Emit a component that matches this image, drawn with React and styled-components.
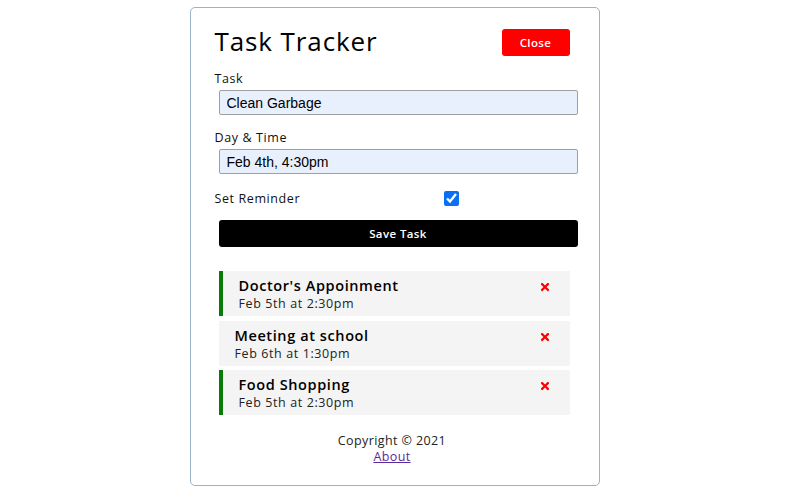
import React, { useState } from "react";
import styled, { createGlobalStyle } from "styled-components";
import { FaTimes } from "react-icons/fa";

const Global = createGlobalStyle`
  * { box-sizing: border-box; }
  body {
    margin: 0;
    background: #fff;
    font-family: "Open Sans", "Noto Sans", sans-serif;
    color: #000;
  }
`;

const Page = styled.div`
  display: flex;
  justify-content: center;
  padding: 7px 11px 0 0;
`;

const Container = styled.div`
  width: 410px;
  height: 479px;
  border: 1.5px solid #98b3ca;
  border-radius: 5px;
  padding: 21px 29px 20px 24px;
  display: flex;
  flex-direction: column;
`;

const Header = styled.header`
  display: flex;
  justify-content: space-between;
  align-items: center;
  height: 27px;
  margin-bottom: 15px;
`;

const Title = styled.h1`
  margin: 0;
  font-size: 26px;
  font-weight: 500;
  letter-spacing: 0.9px;
  line-height: 27px;
  margin-top: -3px;
`;

const Button = styled.button`
  background: ${(p) => p.$bg};
  color: #fff;
  border: none;
  border-radius: 3px;
  height: 27px;
  font-family: "Open Sans", sans-serif;
  font-size: 11.5px;
  font-weight: 600;
  letter-spacing: 0.4px;
  cursor: pointer;
  padding: 0;
  width: ${(p) => (p.$block ? "calc(100% + 4px)" : "68px")};
  margin-left: ${(p) => (p.$block ? "4px" : "0")};
  display: block;
`;

const Form = styled.form`
  display: flex;
  flex-direction: column;
`;

const Field = styled.div`
  display: flex;
  flex-direction: column;
  margin-bottom: 15px;
`;

const Label = styled.label`
  font-size: 12.5px;
  line-height: 16px;
  height: 16px;
  margin-bottom: 3px;
  letter-spacing: 0.6px;
  color: #111;
`;

const Input = styled.input`
  width: calc(100% + 4px);
  margin-left: 4px;
  height: 25px;
  background: #e8f0fe;
  border: 1.5px solid #a0a0a0;
  border-radius: 2px;
  padding: 0 7px;
  font-family: "Liberation Sans", Arial, sans-serif;
  font-size: 14px;
  color: #000;
`;

const CheckRow = styled.div`
  display: flex;
  align-items: center;
  height: 19px;
  margin-bottom: 12px;
`;

const CheckLabel = styled.label`
  flex: 1;
  font-size: 12.5px;
  letter-spacing: 0.6px;
  color: #111;
`;

const Check = styled.input`
  flex: 2;
  height: 15px;
  margin: 0;
  accent-color: #0b6ff2;
`;

const TaskList = styled.div`
  display: flex;
  flex-direction: column;
  gap: 4.5px;
  margin-top: 24px;
`;

const TaskItem = styled.div`
  margin-left: 4px;
  height: 45px;
  background: #f4f4f4;
  border-left: ${(p) => (p.$reminder ? "4px solid #0b7a0b" : "none")};
  padding: 6px 19px 0 16px;
  display: flex;
  justify-content: space-between;
  align-items: flex-start;
`;

const TaskText = styled.div`
  display: flex;
  flex-direction: column;
`;

const TaskTitle = styled.h3`
  margin: 0;
  font-size: 14.5px;
  font-weight: 600;
  line-height: 18px;
  letter-spacing: 0.6px;
`;

const TaskDate = styled.p`
  margin: 0;
  font-size: 12.5px;
  line-height: 17px;
  letter-spacing: 0.6px;
  color: #222;
`;

const Remove = styled(FaTimes)`
  color: #ff0000;
  width: 12px;
  height: 12px;
  margin-top: 4px;
`;

const Footer = styled.footer`
  margin-top: 18px;
  text-align: center;
  font-size: 12.5px;
  line-height: 16px;
  letter-spacing: 0.4px;
  color: #222;
`;

const Copy = styled.p`
  margin: 0;
`;

const Link = styled.a`
  color: #5a2a9e;
  text-decoration: underline;
`;

const tasks = [
  { id: 1, text: "Doctor's Appoinment", day: "Feb 5th at 2:30pm", reminder: true },
  { id: 2, text: "Meeting at school", day: "Feb 6th at 1:30pm", reminder: false },
  { id: 3, text: "Food Shopping", day: "Feb 5th at 2:30pm", reminder: true },
];

export default function App() {
  const [text, setText] = useState("Clean Garbage");
  const [day, setDay] = useState("Feb 4th, 4:30pm");
  const [reminder, setReminder] = useState(true);

  return (
    <>
      <Global />
      <Page>
        <Container>
          <Header>
            <Title>Task Tracker</Title>
            <Button $bg="#ff0000" type="button">Close</Button>
          </Header>
          <Form onSubmit={(e) => e.preventDefault()}>
            <Field>
              <Label>Task</Label>
              <Input value={text} onChange={(e) => setText(e.target.value)} />
            </Field>
            <Field>
              <Label>Day &amp; Time</Label>
              <Input value={day} onChange={(e) => setDay(e.target.value)} />
            </Field>
            <CheckRow>
              <CheckLabel>Set Reminder</CheckLabel>
              <Check
                type="checkbox"
                checked={reminder}
                onChange={(e) => setReminder(e.target.checked)}
              />
            </CheckRow>
            <Button $bg="#000" $block type="submit">Save Task</Button>
          </Form>
          <TaskList>
            {tasks.map((t) => (
              <TaskItem key={t.id} $reminder={t.reminder}>
                <TaskText>
                  <TaskTitle>{t.text}</TaskTitle>
                  <TaskDate>{t.day}</TaskDate>
                </TaskText>
                <Remove />
              </TaskItem>
            ))}
          </TaskList>
          <Footer>
            <Copy>Copyright &copy; 2021</Copy>
            <Link href="#about">About</Link>
          </Footer>
        </Container>
      </Page>
    </>
  );
}
